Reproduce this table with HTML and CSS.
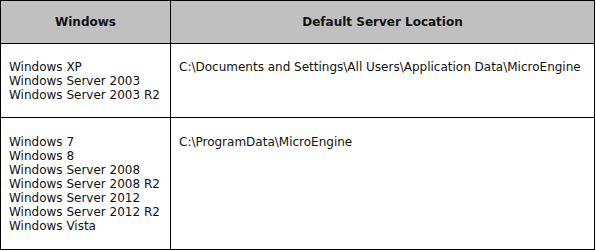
FILE: index.html
```html
<!DOCTYPE html>
<html>
<head>
<meta charset="utf-8">
<link rel="stylesheet" href="styles.css">
</head>
<body>
<table class="loc-table">
  <thead>
    <tr>
      <th class="col-os">Windows</th>
      <th class="col-path">Default Server Location</th>
    </tr>
  </thead>
  <tbody>
    <tr class="row-legacy">
      <td>Windows XP<br>Windows Server 2003<br>Windows Server 2003 R2</td>
      <td>C:\Documents and Settings\All Users\Application Data\MicroEngine</td>
    </tr>
    <tr class="row-modern">
      <td>Windows 7<br>Windows 8<br>Windows Server 2008<br>Windows Server 2008 R2<br>Windows Server 2012<br>Windows Server 2012 R2<br>Windows Vista</td>
      <td>C:\ProgramData\MicroEngine</td>
    </tr>
  </tbody>
</table>
</body>
</html>
```
FILE: styles.css
```css
html, body {
  margin: 0;
  padding: 0;
  background: #ffffff;
}
.loc-table {
  border-collapse: collapse;
  width: 595px;
  font-family: "DejaVu Sans", Verdana, sans-serif;
  font-size: 12px;
  line-height: 14px;
  color: #111;
}
.loc-table th,
.loc-table td {
  border: 1px solid #000;
  vertical-align: top;
  text-align: left;
}
.loc-table th {
  background: #c0c0c0;
  font-weight: bold;
  text-align: center;
  height: 42px;
  padding: 0 8px;
  vertical-align: middle;
}
.loc-table td {
  padding: 16px 8px 15px;
}
.row-modern td {
  padding: 17px 8px 16px;
}
.col-os {
  width: 153px;
}
```
